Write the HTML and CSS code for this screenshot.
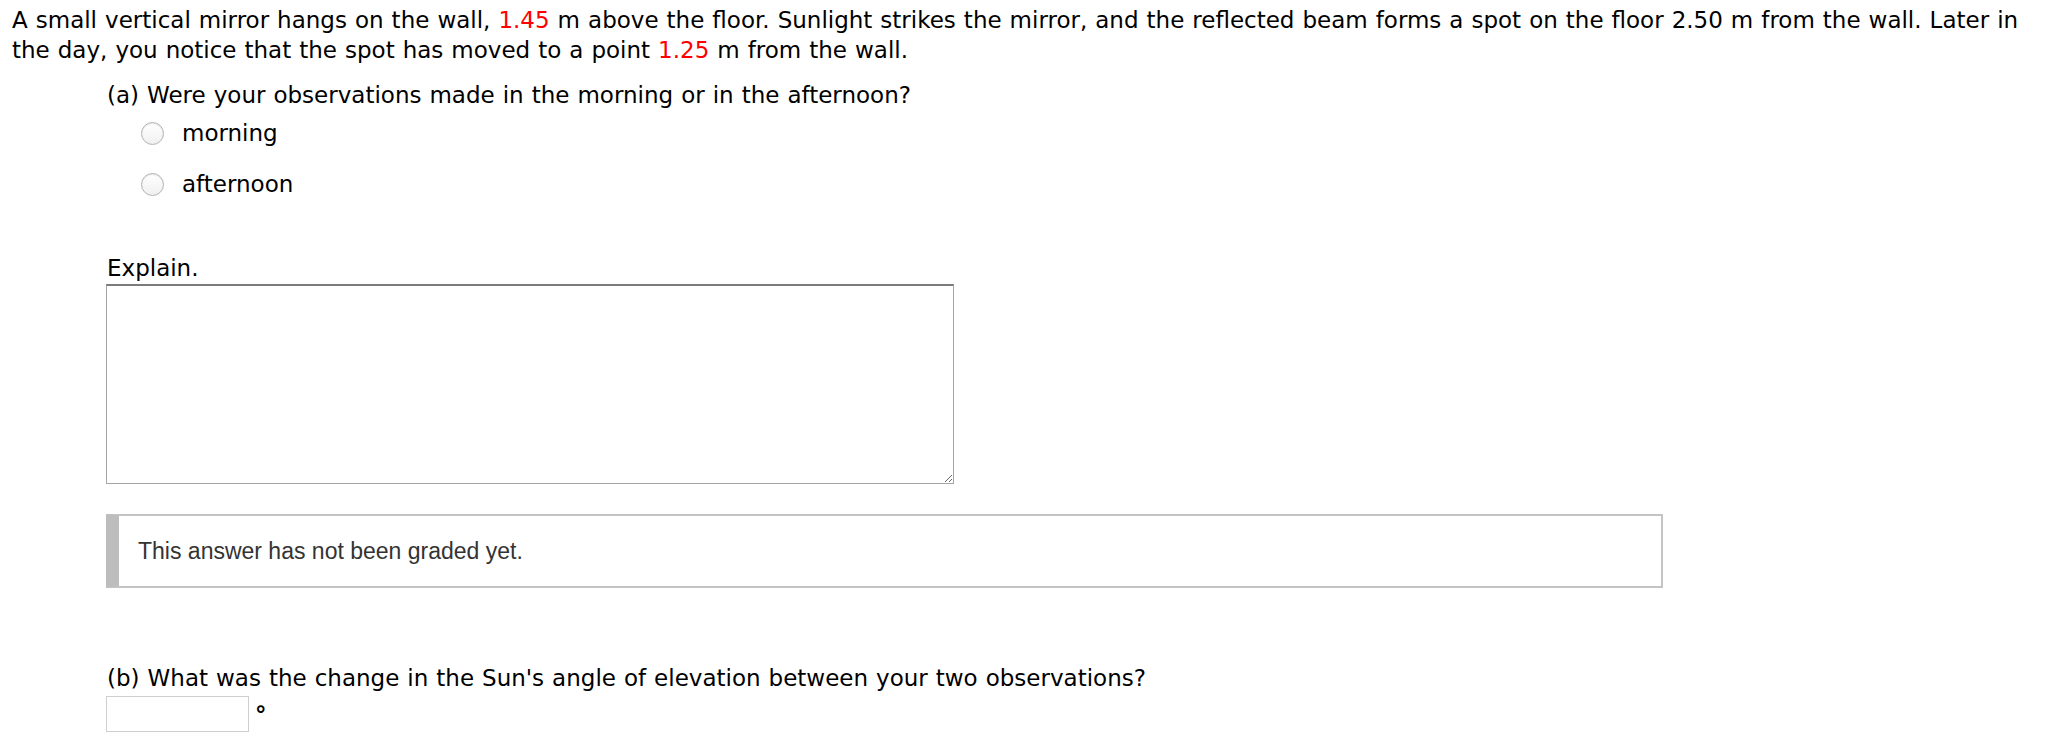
FILE: index.html
```html
<!DOCTYPE html>
<html>
<head>
<meta charset="utf-8">
<link rel="stylesheet" href="styles.css">
</head>
<body>
<div class="page">
  <p class="intro">A small vertical mirror hangs on the wall, <span class="num">1.45</span> m above the floor. Sunlight strikes the mirror, and the reflected beam forms a spot on the floor 2.50 m from the wall. Later in the day, you notice that the spot has moved to a point <span class="num">1.25</span> m from the wall.</p>
  <div class="part">
    <div class="line">(a) Were your observations made in the morning or in the afternoon?</div>
    <div class="options">
      <label class="option"><input type="radio" name="a" class="radio"><span>morning</span></label>
      <label class="option"><input type="radio" name="a" class="radio"><span>afternoon</span></label>
    </div>
    <div class="line explain">Explain.</div>
    <textarea class="answer"></textarea>
    <div class="grade">This answer has not been graded yet.</div>
    <div class="line part-b">(b) What was the change in the Sun's angle of elevation between your two observations?</div>
    <div class="input-row">
      <input type="text" class="num-input">
      <span class="unit">°</span>
    </div>
  </div>
</div>
</body>
</html>
```
FILE: styles.css
```css
html, body {
  margin: 0;
  padding: 0;
  background: #fff;
}
.page {
  padding: 5px 0 0 12px;
  font-family: "DejaVu Sans", Verdana, sans-serif;
  font-size: 23px;
  line-height: 30px;
  color: #000;
  word-spacing: 0.7px;
}
.intro {
  margin: 0;
}
.num {
  color: #f00;
}
.part {
  margin: 15px 0 0 95px;
  display: flex;
  flex-direction: column;
  align-items: flex-start;
}
.line {
  height: 30px;
  white-space: nowrap;
}
.options {
  display: flex;
  flex-direction: column;
  gap: 21px;
  margin-top: 8px;
  padding-left: 34px;
}
.option {
  display: flex;
  align-items: center;
  height: 30px;
  gap: 18px;
}
.radio {
  appearance: none;
  -webkit-appearance: none;
  margin: 0;
  width: 23px;
  height: 23px;
  border-radius: 50%;
  border: 1px solid #b3b3b3;
  background: linear-gradient(#ffffff, #f0f0f0);
  box-shadow: inset 0 1px 1px rgba(0,0,0,0.1);
}
.explain {
  margin-top: 54px;
}
.answer {
  margin: 1px 0 0 -1px;
  width: 848px;
  height: 200px;
  box-sizing: border-box;
  border-style: solid;
  border-width: 2px 1px 1px 1px;
  border-color: #7b7b7b #a5a5a5 #a5a5a5 #a5a5a5;
  padding: 2px;
  font-family: "DejaVu Sans", sans-serif;
  font-size: 16px;
  resize: both;
  background: #fff;
}
.grade {
  margin: 30px 0 0 -1px;
  width: 1557px;
  height: 74px;
  box-sizing: border-box;
  border: 2px solid #c4c4c4;
  border-left: 13px solid #bdbdbd;
  padding-left: 19px;
  display: flex;
  align-items: center;
  font-family: "Liberation Sans", Arial, sans-serif;
  font-size: 23px;
  color: #333;
  word-spacing: 0;
}
.part-b {
  margin-top: 75px;
}
.input-row {
  display: flex;
  align-items: flex-start;
  margin: 3px 0 0 -1px;
}
.num-input {
  width: 143px;
  height: 36px;
  box-sizing: border-box;
  border: 1px solid #cfcfcf;
  margin: 0;
  padding: 2px 6px;
  font-size: 18px;
}
.unit {
  margin: 4px 0 0 6px;
  line-height: 30px;
  font-weight: bold;
}
```
